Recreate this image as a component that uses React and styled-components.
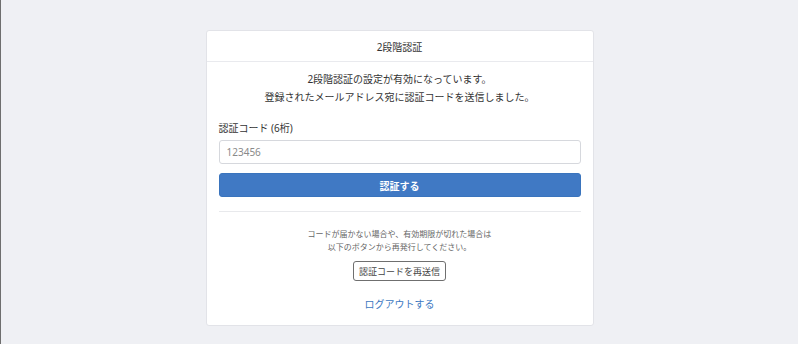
import React from "react";
import styled, { createGlobalStyle } from "styled-components";

const GlobalStyle = createGlobalStyle`
  html, body {
    margin: 0;
    padding: 0;
    background: #eff0f4;
  }
  body {
    font-family: "Noto Sans", "Noto Sans CJK JP", sans-serif;
    color: #333;
  }
`;

function App() {
  return (
    <>
      <GlobalStyle />
      <Page>
        <Card>
          <CardHeader>2段階認証</CardHeader>
          <CardBody>
            <Lead>
              2段階認証の設定が有効になっています。
              <br />
              登録されたメールアドレス宛に認証コードを送信しました。
            </Lead>
            <Label htmlFor="code">認証コード (6桁)</Label>
            <Input id="code" type="text" placeholder="123456" />
            <PrimaryButton type="button">認証する</PrimaryButton>
            <Divider />
            <Note>
              コードが届かない場合や、有効期限が切れた場合は
              <br />
              以下のボタンから再発行してください。
            </Note>
            <ResendRow>
              <OutlineButton type="button">認証コードを再送信</OutlineButton>
            </ResendRow>
            <LinkRow>
              <TextLink href="#">ログアウトする</TextLink>
            </LinkRow>
          </CardBody>
        </Card>
      </Page>
    </>
  );
}

export default App;

const Page = styled.div`
  min-height: 344px;
  box-sizing: border-box;
  padding-top: 30px;
  border-left: 1px solid #6e6e6e;
`;

const Card = styled.div`
  width: 388px;
  margin: 0 auto;
  background: #fff;
  border: 1px solid #e2e3e8;
  border-radius: 3px;
  box-sizing: border-box;
`;

const CardHeader = styled.div`
  height: 30px;
  display: flex;
  align-items: center;
  justify-content: center;
  font-size: 10px;
  color: #333;
  border-bottom: 1px solid #e9eaee;
`;

const CardBody = styled.div`
  padding: 8px 12px 12px;
  display: flex;
  flex-direction: column;
`;

const Lead = styled.p`
  margin: 0;
  text-align: center;
  font-size: 10px;
  line-height: 18px;
  color: #333;
`;

const Label = styled.label`
  margin-top: 13px;
  font-size: 10px;
  line-height: 18px;
  color: #333;
`;

const Input = styled.input`
  margin-top: 3px;
  height: 24px;
  box-sizing: border-box;
  border: 1px solid #d6d8dd;
  border-radius: 3px;
  padding: 0 7px;
  font-family: inherit;
  font-size: 10px;
  color: #333;
  outline: none;
  &::placeholder {
    color: #8a8a8a;
  }
`;

const PrimaryButton = styled.button`
  margin-top: 9px;
  height: 24px;
  border: 1px solid #3a74bd;
  border-radius: 3px;
  background: #4079c4;
  color: #fff;
  font-family: inherit;
  font-size: 10px;
  font-weight: 600;
  cursor: pointer;
`;

const Divider = styled.hr`
  margin: 14px 0 0;
  border: 0;
  border-top: 1px solid #e8e9ec;
`;

const Note = styled.p`
  margin: 15px 0 0;
  text-align: center;
  font-size: 8px;
  line-height: 13px;
  color: #666;
`;

const ResendRow = styled.div`
  margin-top: 8px;
  display: flex;
  justify-content: center;
`;

const OutlineButton = styled.button`
  height: 20px;
  padding: 0 5px;
  border: 1px solid #6f6f6f;
  border-radius: 3px;
  background: #fff;
  color: #444;
  font-family: inherit;
  font-size: 9px;
  cursor: pointer;
`;

const LinkRow = styled.div`
  margin-top: 12px;
  text-align: center;
  line-height: 18px;
`;

const TextLink = styled.a`
  font-size: 10px;
  color: #3b77c1;
  text-decoration: none;
`;
